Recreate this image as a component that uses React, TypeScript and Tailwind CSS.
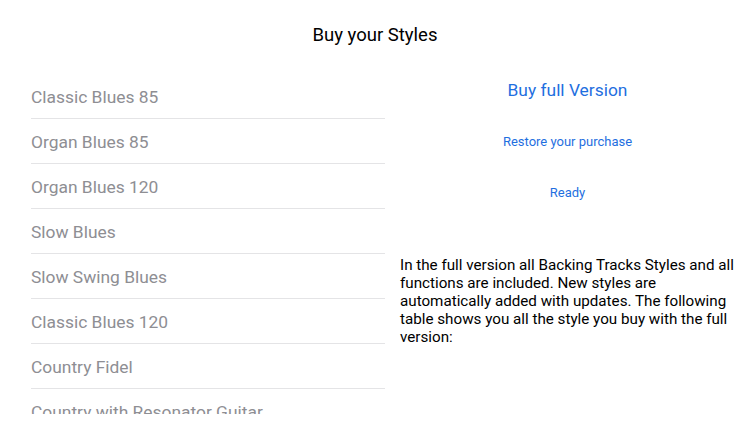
import React from "react";

const items = [
  "Classic Blues 85",
  "Organ Blues 85",
  "Organ Blues 120",
  "Slow Blues",
  "Slow Swing Blues",
  "Classic Blues 120",
  "Country Fidel",
  "Country with Resonator Guitar",
];

export default function App() {
  return (
    <div
      className="w-[750px] h-[422px] bg-white overflow-hidden flex flex-col"
      style={{ fontFamily: "Roboto, 'Liberation Sans', sans-serif" }}
    >
      <div className="h-[72px] flex items-center justify-center text-[18.5px] text-black">
        Buy your Styles
      </div>
      <div className="flex flex-1">
        <div className="w-[385px] h-[340px] mt-[2px] overflow-hidden pl-[31px]">
          {items.map((t, i) => (
            <div
              key={t}
              className={`h-[45px] pt-[2px] flex items-center text-[17.4px] text-[#8e8e93] ${
                i < items.length - 1 ? "border-b border-[#e4e4e6]" : ""
              }`}
            >
              {t}
            </div>
          ))}
        </div>
        <div className="flex-1 flex flex-col">
          <div className="h-[36px] flex items-center justify-center text-[17.4px] text-[#1f6fe0]">
            Buy full Version
          </div>
          <div className="h-[30px] mt-[19px] flex items-center justify-center text-[13px] text-[#1f6fe0]">
            Restore your purchase
          </div>
          <div className="h-[30px] mt-[21px] flex items-center justify-center text-[13px] text-[#1f6fe0]">
            Ready
          </div>
          <p className="mt-[48px] pl-[15px] pr-[6px] text-[15.2px] leading-[18px] text-black">
            In the full version all Backing Tracks Styles and all functions are included. New styles are automatically added with updates. The following table shows you all the style you buy with the full version:
          </p>
        </div>
      </div>
    </div>
  );
}
